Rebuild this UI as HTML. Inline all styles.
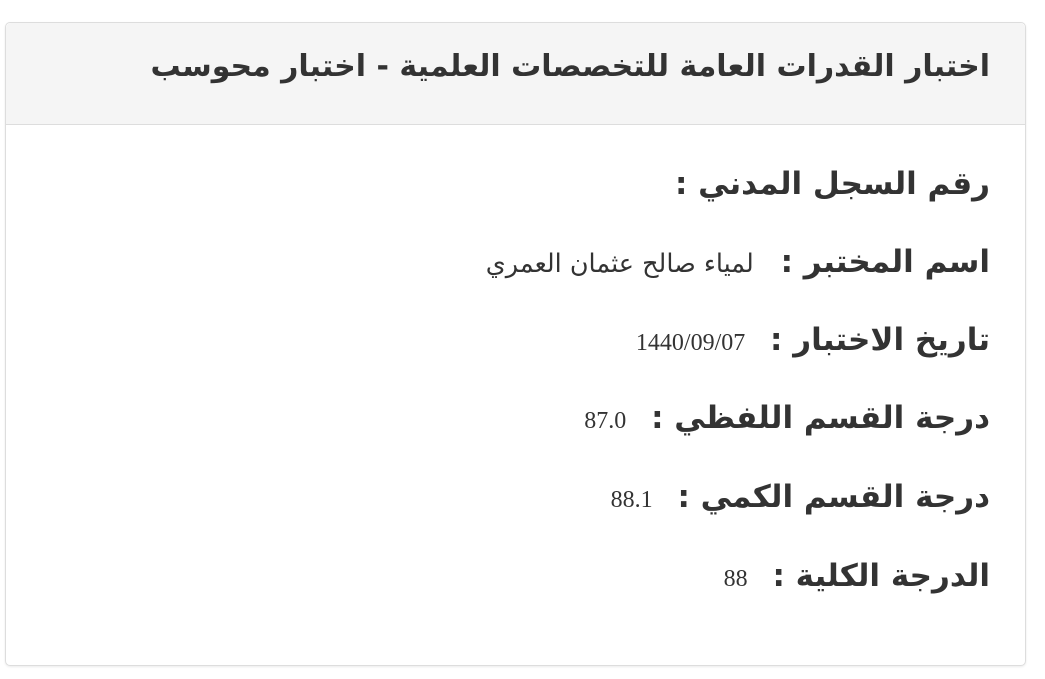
<!DOCTYPE html>
<html dir="rtl"><head><meta charset="utf-8"><style>
body{margin:0;background:#fff;width:1045px;height:679px;overflow:hidden;font-family:"DejaVu Sans","Liberation Sans",sans-serif;color:#333}
.card{position:absolute;left:5px;top:22px;width:1019px;height:642px;border:1px solid #ddd;border-radius:5px;box-shadow:0 1px 2px rgba(0,0,0,.08)}
.hd{height:101px;background:#f5f5f5;border-bottom:1px solid #ddd;border-radius:5px 5px 0 0;position:relative}
.hd h1{position:absolute;right:35px;top:26px;margin:0;font-size:30px;font-weight:bold;color:#333}
.row{position:absolute;right:35px;white-space:nowrap;font-size:31px;font-weight:bold;color:#333}
.v{font-weight:normal;font-size:24px;font-family:"Liberation Serif",serif;margin-right:14px;color:#333}
.n{font-family:"DejaVu Sans",sans-serif;font-size:25.5px;margin-right:16px}
</style></head><body>
<div class="card">
<div class="hd"><h1>اختبار القدرات العامة للتخصصات العلمية - اختبار محوسب</h1></div>
<div class="row" style="top:143px">رقم السجل المدني :</div>
<div class="row" style="top:221px">اسم المختبر : <span class="v n">لمياء صالح عثمان العمري</span></div>
<div class="row" style="top:299px">تاريخ الاختبار : <span class="v">1440/09/07</span></div>
<div class="row" style="top:377px">درجة القسم اللفظي : <span class="v">87.0</span></div>
<div class="row" style="top:456px">درجة القسم الكمي : <span class="v">88.1</span></div>
<div class="row" style="top:535px">الدرجة الكلية : <span class="v">88</span></div>
</div>
</body></html>
